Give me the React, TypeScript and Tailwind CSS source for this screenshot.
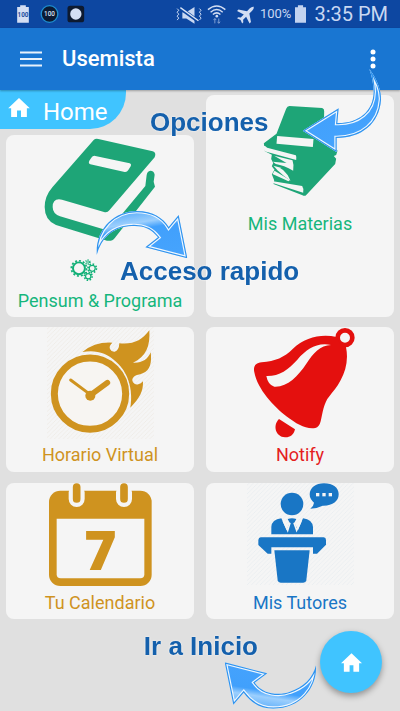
import React, { useId } from "react";

const HomeGlyph = ({ className }: { className: string }) => (
  <svg viewBox="0 0 66 58" className={className} fill="currentColor" aria-hidden="true">
    <path d="M33 0 L66 31 H57 V58 H39 V38 H27 V58 H9 V31 H0 Z" />
  </svg>
);

function StatusBar() {
  return (
    <div className="flex h-7 items-center bg-[#0d47a1] pl-4 pr-3 text-[#c9d8f2]">
      <svg viewBox="48 12 206 60" className="h-5 w-[69px]" aria-hidden="true">
        <path d="M51 21 h9 v-5 h17 v5 h9 v47 h-35z" fill="#d3def3" />
        <text x="68.500" y="52" textAnchor="middle" fontSize="19" fontWeight="700" fill="#1d4c9d" className="font-[Roboto,sans-serif]">100</text>
        <circle cx="148" cy="42" r="25" fill="#0b1a33" stroke="#1f8fd0" strokeWidth="4" />
        <text x="148" y="49" textAnchor="middle" fontSize="19" fontWeight="500" fill="#dbe6f7" className="font-[Roboto,sans-serif]">100</text>
        <rect x="202" y="17" width="50" height="50" rx="8" fill="#0d1a30" />
        <circle cx="227" cy="42" r="17" fill="#d3def3" />
      </svg>
      <div className="ml-auto flex items-center">
        <svg viewBox="530 8 242 64" className="h-[21px] w-[81px]" aria-hidden="true">
          <g fill="none" stroke="#c9d8f2" strokeWidth="3">
            <path d="M534 22 l5 5 -5 6 5 6 -5 6 5 6 -5 6" />
            <path d="M602 22 l5 5 -5 6 5 6 -5 6 5 6 -5 6" />
          </g>
          <path d="M550 33 H562 L587 17 V68 L562 52 H550Z" fill="#c9d8f2" />
          <path d="M543 20 L599 61" stroke="#0d47a1" strokeWidth="11" />
          <path d="M544 19 L599 59" stroke="#dbe5f6" strokeWidth="4" />
          <g fill="none" stroke="#d3def3" strokeWidth="4.500">
            <path d="M628 25 Q655 3 681 25" />
            <path d="M636 33 Q655 17 673 33" />
            <path d="M643 40 Q655 30 666 40" />
          </g>
          <circle cx="655" cy="45" r="4" fill="#d3def3" />
          <path d="M649 67 V53 M645 57 l4 -5 4 5 M661 52 V66 M657 62 l4 5 4 -5" fill="none" stroke="#7f9fd3" strokeWidth="3" />
          <path
            transform="translate(745 39) rotate(45)"
            d="M0 -32 Q5 -29 5 -20 V-8 L27 7 V13 L5 6 V19 L11 24 V29 L0 25 L-11 29 V24 L-5 19 V6 L-27 13 V7 L-5 -8 V-20 Q-5 -29 0 -32Z"
            fill="#d3def3"
          />
        </svg>
        <span className="ml-1 text-[13px] leading-5">100%</span>
        <svg viewBox="0 0 34 54" className="ml-1 h-[18px] w-[11px]" aria-hidden="true">
          <path d="M0 6 H9 V0 H25 V6 H34 V54 H0Z" fill="#c3d3f0" />
        </svg>
        <span className="ml-2 text-xl leading-7">3:35 PM</span>
      </div>
    </div>
  );
}

function AppBar() {
  return (
    <header className="relative z-10 flex h-[62px] items-center bg-[#1976d2] px-5 text-white shadow-[0_1px_2px_rgba(0,0,0,0.3)]">
      <button type="button" aria-label="Menu" className="flex h-10 w-6 items-center">
        <svg viewBox="0 0 22 16" className="h-4 w-[22px]" aria-hidden="true">
          <path d="M0 1.500H22M0 8H22M0 14.500H22" stroke="#e8f1fb" strokeWidth="2" />
        </svg>
      </button>
      <h1 className="ml-[18px] text-[22px] font-medium leading-7">Usemista</h1>
      <button type="button" aria-label="Opciones" className="ml-auto flex h-10 w-[14px] items-center justify-center">
        <svg viewBox="0 0 6 20" className="h-5 w-[6px]" fill="currentColor" aria-hidden="true">
          <circle cx="3" cy="3" r="2.500" />
          <circle cx="3" cy="10" r="2.500" />
          <circle cx="3" cy="17" r="2.500" />
        </svg>
      </button>
    </header>
  );
}

const BookIcon = () => (
  <svg viewBox="129 36 345 315" className="h-[105px] w-[115px]" aria-hidden="true">
    <path
      fill="#1ea577"
      fillRule="evenodd"
      d="M281 45 Q286 40 295 42 L458 79 Q470 83 464 97 L328 256 Q322 264 312 261 L186 224 Q158 218 158 246 Q158 266 180 274 L318 315 Q325 317 331 310 L436 183 L440 150 Q442 138 451 137 Q462 137 464 149 L461 170 L465 185 L345 338 Q336 350 321 347 L168 300 Q134 286 134 246 Q134 214 157 187 Z M286 93 Q279 91 274 98 L268 107 Q264 115 271 118 L374 141 Q381 142 385 135 L392 124 Q395 117 389 115 Z"
    />
  </svg>
);

function Gear({ cx, cy, r, w, dash }: { cx: number; cy: number; r: number; w: number; dash: string }) {
  return (
    <g fill="none" stroke="#12b077">
      <circle cx={cx} cy={cy} r={r} strokeWidth={w} />
      <circle cx={cx} cy={cy} r={r + w / 2 + 2} strokeWidth="5" pathLength="100" strokeDasharray={dash} />
    </g>
  );
}

const GearsIcon = () => (
  <svg viewBox="208 402 184 66" className="h-[22px] w-[61px]" aria-hidden="true">
    <Gear cx={235} cy={430} r={18} w={6} dash="4.333 4" />
    <Gear cx={275} cy={430} r={9} w={3.5} dash="6 6.500" />
    <Gear cx={263} cy={454} r={8} w={3.5} dash="6 6.500" />
    <Gear cx={262} cy={411} r={3} w={2} dash="8 8.667" />
  </svg>
);

const BooksIcon = () => (
  <svg viewBox="140 45 320 276" className="h-[92px] w-[107px]" aria-hidden="true">
    <path
      fill="#1ea577"
      d="M267 48 L365 54 Q372 56 371 64 L370 120 L411 182 L407 195 L400 198 L407 206 L404 222 L318 314 Q313 320 306 316 L219 282 L221 271 L214 253 L222 239 L214 229 L218 219 L212 207 L214 194 L193 184 L190 160 L228 131 L257 56 Q260 48 267 48Z"
    />
    <g fill="#f5f5f5">
      <path d="M230 138 L339 147 L337 171 L228 161Z" />
      <path d="M188 168 Q193 166 200 173 L286 196 Q289 202 287 210 L192 184Z" />
      <path d="M221 197 L276 211 Q281 225 278 242 Q250 226 226 222 L217 215 L258 219Z" />
      <path d="M219 227 Q254 232 270 272 Q250 260 231 241Z" />
      <path d="M222 242 L268 270 L264 274 L216 252Z" />
      <path d="M218 274 L305 288 Q311 297 308 308 L217 279Z" />
    </g>
  </svg>
);

function Hatch({ id, color }: { id: string; color: string }) {
  return (
    <>
      <pattern id={id} width="13" height="13" patternUnits="userSpaceOnUse">
        <path d="M-2 15 L15 -2 M-2 2 L2 -2 M11 15 L15 11" stroke={color} strokeWidth="1.500" />
      </pattern>
      <rect x="140" y="22" width="321" height="336" fill={`url(#${id})`} />
    </>
  );
}

const ClockIcon = () => (
  <svg viewBox="140 22 321 336" className="h-28 w-[107px]" aria-hidden="true">
    <Hatch id="hatch-gold" color="#eae5dc" />
    <circle cx="269" cy="222" r="107" fill="#f7f5f2" stroke="#cf931f" strokeWidth="21" />
    <path d="M211 181 L262 219" stroke="#cf931f" strokeWidth="9" strokeLinecap="round" />
    <path d="M275 223 L321 189" stroke="#cf931f" strokeWidth="17" strokeLinecap="round" />
    <circle cx="270" cy="228" r="15" fill="#cf931f" />
    <path
      fill="#cf931f"
      d="M246 97 Q284 66 336 69 Q325 79 329 88 Q333 97 343 96 Q356 93 357 71 C400 75 425 62 447 32 C450 80 437 111 398 129 C424 131 443 119 451 98 C455 127 450 153 427 161 C417 167 409 164 400 172 Q393 179 398 188 Q405 197 414 194 Q422 192 428 185 C429 215 419 234 390 264 C400 207 381 155 347 126 C318 99 286 90 246 97Z"
    />
  </svg>
);

const BellIcon = () => (
  <svg viewBox="140 22 321 336" className="h-28 w-[107px] overflow-visible" aria-hidden="true">
    <circle cx="434" cy="54" r="22" fill="none" stroke="#e4100e" strokeWidth="14" />
    <path
      fill="#e4100e"
      d="M409 52 C365 42 315 51 277 88 C252 113 225 125 184 128 C165 130 158 140 162 158 C172 210 220 260 258 290 C290 314 315 329 345 325 Q357 322 361 305 C366 282 371 248 386 231 C412 201 451 151 437 82 Q418 79 409 52Z"
    />
    <path fill="#f5f5f5" d="M198 169 C237 170 263 151 291 120 C319 88 350 67 392 76 C360 76 338 101 319 131 C291 173 261 203 222 201 Q203 196 198 169Z" />
    <path fill="#e4100e" d="M236 298 L284 329 C280 347 267 354 254 353 C226 351 216 318 236 298Z" />
  </svg>
);

const CalendarIcon = () => (
  <svg viewBox="140 22 321 306" className="h-[102px] w-[107px] overflow-visible" aria-hidden="true">
    <rect x="146" y="45" width="308" height="286" rx="34" fill="#cf931f" />
    <path d="M169 129 H432 V296 Q432 308 420 308 H181 Q169 308 169 296Z" fill="#f5f5f5" />
    <g strokeLinecap="round">
      <path d="M229 50 V70 M371 50 V70" stroke="#f5f5f5" strokeWidth="48" />
      <path d="M229 34 V70 M371 34 V70" stroke="#cf931f" strokeWidth="23" />
    </g>
    <text x="300" y="284" textAnchor="middle" fontSize="167" fontWeight="800" fill="#cf931f" className="font-['Open_Sans',sans-serif]">7</text>
  </svg>
);

const TutorIcon = () => (
  <svg viewBox="140 22 321 306" className="h-[102px] w-[107px]" aria-hidden="true">
    <Hatch id="hatch-blue" color="#e2e8ee" />
    <g fill="#1976c5">
      <circle cx="275" cy="85" r="34" />
      <path d="M371 23 C398 23 415 36 415 56 C415 77 396 91 367 90 Q352 98 330 99 Q340 92 341 81 Q328 70 328 56 C329 36 346 23 371 23Z" />
      <path d="M213 176 V154 Q214 132 243 128 L259 164 L268 141 L262 130 Q275 125 288 130 L282 141 L293 164 L308 128 Q336 132 338 154 V176Z" />
      <path d="M181 185 H370 Q377 186 377 193 V207 L350 234 H338 V215 H213 V234 H202 L174 208 V193 Q175 186 181 185Z" />
      <path d="M222 224 H328 L318 314 Q317 321 309 321 H241 Q233 321 232 314Z" />
    </g>
    <path d="M249 136 L262 164 L269 141 M302 136 L289 164 L281 141" fill="none" stroke="#f5f5f5" strokeWidth="5" />
    <g fill="#f5f5f5">
      <rect x="347" y="52" width="10" height="10" />
      <rect x="366" y="52" width="10" height="10" />
      <rect x="385" y="52" width="10" height="10" />
    </g>
  </svg>
);

function Card({ label, className, children }: { label: string; className: string; children: React.ReactNode }) {
  return (
    <button type="button" className={`flex w-full flex-col items-center justify-start rounded-lg bg-[#f5f5f5] text-lg leading-6 ${className}`}>
      {children}
      <span className="whitespace-nowrap">{label}</span>
    </button>
  );
}

function Arrow({ d, viewBox, className, flip }: { d: string; viewBox: string; className: string; flip?: boolean }) {
  const id = useId().replace(/[^a-zA-Z0-9]/g, "");
  return (
    <svg viewBox={viewBox} className={className} aria-hidden="true">
      <defs>
        <linearGradient id={`g${id}`} x1="0" x2="0.300" y1={flip ? "1" : "0"} y2={flip ? "0" : "1"}>
          <stop offset="0" stopColor="#3f9ff8" />
          <stop offset="0.350" stopColor="#9ccffd" />
          <stop offset="0.480" stopColor="#41a0fc" />
          <stop offset="1" stopColor="#45a3fd" />
        </linearGradient>
        <clipPath id={`c${id}`}>
          <path d={d} />
        </clipPath>
      </defs>
      <g clipPath={`url(#c${id})`}>
        <path d={d} fill={`url(#g${id})`} />
        <path d={d} fill="none" stroke="#eef7ff" strokeWidth="14" />
        <path d={d} fill="none" stroke="#2f93ee" strokeWidth="7" />
      </g>
    </svg>
  );
}

const Note = ({ className, children }: { className: string; children: React.ReactNode }) => (
  <p className={`absolute whitespace-nowrap font-['Liberation_Sans',Arial,sans-serif] text-[26px] font-bold leading-[30px] text-[#1460ac] [text-shadow:0_0_2px_#ffffff] ${className}`}>
    {children}
  </p>
);

function Annotations() {
  return (
    <div className="pointer-events-none absolute inset-0 z-20">
      <Note className="left-[150px] top-[107px]">Opciones</Note>
      <Arrow
        className="absolute right-[17px] top-[68px] h-[86px] w-[82px]"
        viewBox="303 204 246 258"
        d="M508 207 C532 238 545 275 543 300 C538 370 485 414 410 414 L410 457 L308 392 L416 325 L412 369 C475 370 520 335 521 275 Q520 240 508 207Z"
      />
      <Arrow
        className="absolute left-[95px] top-[210px] h-[50px] w-[94px]"
        viewBox="285 255 282 150"
        d="M290 390 C286 310 345 258 410 258 C460 258 490 280 506 306 L536 270 L562 400 L436 367 L474 337 C450 305 420 300 385 304 C335 310 304 340 290 390Z"
      />
      <Note className="left-[120px] top-[256px]">Acceso rapido</Note>
      <Note className="bottom-[50px] right-[142px]">Ir a Inicio</Note>
      <Arrow
        flip
        className="absolute bottom-0 right-[82px] h-[50px] w-[94px]"
        viewBox="312 153 282 150"
        d="M588 166 C592 230 545 296 460 296 C420 296 393 278 371 248 L340 284 L314 157 L442 190 L404 218 C430 255 480 257 510 245 C550 232 578 205 588 166Z"
      />
    </div>
  );
}

export default function App() {
  return (
    <div className="relative min-h-screen bg-[#e0e0e0] font-[Roboto,sans-serif]">
      <StatusBar />
      <AppBar />
      <main className="grid grid-cols-2 gap-x-3 px-[6px]">
        <div>
          <h2 className="-ml-[6px] flex h-[39px] w-[126px] items-center rounded-br-[36px] bg-[#40c4ff] pl-2 pt-1 text-2xl text-white">
            <HomeGlyph className="mb-2 h-[19px] w-[22px]" />
            <span className="ml-[13px] leading-7">Home</span>
          </h2>
          <Card label="Pensum & Programa" className="mt-[6px] h-[182px] gap-2 pt-[2px] text-[#15b67c]">
            <span className="flex flex-col items-center gap-[17px]">
              <BookIcon />
              <GearsIcon />
            </span>
          </Card>
        </div>
        <div className="flex pt-[5px]">
          <Card label="Mis Materias" className="gap-[15px] pt-[10px] text-[#15b67c]">
            <BooksIcon />
          </Card>
        </div>
        <Card label="Horario Virtual" className="mt-[10px] h-[145px] gap-1 text-[#cf931f]">
          <ClockIcon />
        </Card>
        <Card label="Notify" className="mt-[10px] h-[145px] gap-1 text-[#e4201e]">
          <BellIcon />
        </Card>
        <Card label="Tu Calendario" className="mt-[11px] h-[136px] gap-[6px] text-[#cf931f]">
          <CalendarIcon />
        </Card>
        <Card label="Mis Tutores" className="mt-[11px] h-[136px] gap-[6px] text-[#1976c5]">
          <TutorIcon />
        </Card>
      </main>
      <button
        type="button"
        aria-label="Ir a Inicio"
        className="fixed bottom-[18px] right-[18px] flex size-[62px] items-center justify-center rounded-full bg-[#40c4ff] text-white shadow-[0_3px_6px_rgba(0,0,0,0.35)]"
      >
        <HomeGlyph className="h-[19px] w-[21px]" />
      </button>
      <Annotations />
    </div>
  );
}
